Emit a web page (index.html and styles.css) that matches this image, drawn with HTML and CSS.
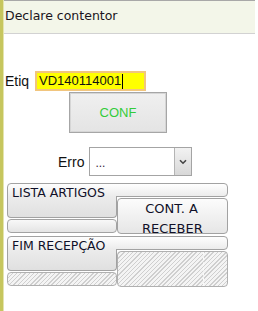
FILE: index.html
```html
<!DOCTYPE html>
<html lang="pt">
<head>
    <meta charset="UTF-8">
    <meta name="viewport" content="width=device-width, initial-scale=1.0">
    <title>Declare contentor</title>
    <link rel="stylesheet" href="styles.css">
</head>
<body>
    <div class="page">
        <div class="side"></div>
        <div class="main">
            <div class="header">Declare contentor</div>

            <div class="etiq-row">
                <label class="label">Etiq</label>
                <div class="field">VD140114001<span class="caret"></span></div>
            </div>

            <button class="conf">CONF</button>

            <div class="erro-row">
                <label class="label">Erro</label>
                <div class="select">
                    <span class="select-text">...</span>
                    <span class="select-arrow">
                        <svg width="8" height="6" viewBox="0 0 8 6"><path d="M1 1.2 L4 4.2 L7 1.2" fill="none" stroke="#444" stroke-width="1.6"/></svg>
                    </span>
                </div>
            </div>

            <div class="menu">
                <div class="group">
                    <div class="tab-top"><span class="tab-text">LISTA ARTIGOS</span></div>
                    <div class="tab-left"></div>
                    <div class="tab-right">CONT. A RECEBER</div>
                    <div class="tab-bottom"></div>
                </div>
                <div class="group">
                    <div class="tab-top"><span class="tab-text">FIM RECEPÇÃO</span></div>
                    <div class="tab-left"></div>
                    <div class="tab-right hatched"><div class="split"></div></div>
                    <div class="tab-bottom hatched"></div>
                </div>
            </div>
        </div>
    </div>
</body>
</html>
```

FILE: styles.css
```css
body {
    margin: 0;
    background: #fff;
    font-family: "DejaVu Sans", sans-serif;
    color: #111;
}

.page {
    display: flex;
    min-height: 311px;
}

.side {
    width: 3px;
    background: #c6c65e;
    border-right: 1px solid #e4e4ae;
}

.main {
    width: 251px;
    display: flex;
    flex-direction: column;
    align-items: flex-start;
}

/* Header */
.header {
    align-self: stretch;
    height: 25px;
    padding: 7px 0 0 1px;
    border-top: 1px solid #a8a8a8;
    border-bottom: 1px solid #d2d2d2;
    background: #f3f6e9;
    font-size: 12.5px;
    line-height: 15px;
    color: #1a1420;
}

.label {
    font-family: "Liberation Sans", Arial, sans-serif;
    font-size: 14px;
    color: #111;
}

/* Etiq */
.etiq-row {
    display: flex;
    align-items: center;
    margin-top: 37px;
    padding-left: 1px;
}

.etiq-row .label {
    width: 30px;
}

.field {
    box-sizing: border-box;
    width: 111px;
    height: 20px;
    padding-left: 2px;
    border: 2px solid #f1c57e;
    background: #ffff00;
    font-family: "Liberation Sans", Arial, sans-serif;
    font-size: 13px;
    line-height: 16px;
    display: flex;
    align-items: center;
}

.caret {
    width: 1px;
    height: 15px;
    margin-left: 1px;
    background: #000;
}

/* CONF */
.conf {
    box-sizing: border-box;
    width: 98px;
    height: 41px;
    margin: 1px 0 0 65px;
    border: 1px solid #a6a6a6;
    box-shadow: inset 0 0 0 1px #d6d6d6;
    background: linear-gradient(#f0f0f0, #e4e4e4);
    font-family: "Liberation Sans", Arial, sans-serif;
    font-size: 13px;
    color: #33cc3a;
    padding: 0;
}

/* Erro */
.erro-row {
    display: flex;
    align-items: center;
    margin: 14px 0 0 54px;
}

.erro-row .label {
    margin-right: 5px;
}

.select {
    box-sizing: border-box;
    width: 103px;
    height: 29px;
    border: 1px solid #a4a4a4;
    background: #fff;
    display: flex;
}

.select-text {
    flex: 1;
    padding: 8px 0 0 5px;
    font-family: "Liberation Sans", Arial, sans-serif;
    font-size: 12px;
    color: #3a1a3a;
}

.select-arrow {
    width: 16px;
    border-left: 1px solid #b4b4b4;
    background: linear-gradient(#f2f2f2, #d8d8d8);
    display: flex;
    align-items: center;
    justify-content: center;
}

/* Menu */
.menu {
    margin: 7px 0 0 3px;
    display: flex;
    flex-direction: column;
    gap: 2px;
}

.group {
    display: grid;
    grid-template-columns: 110px 111px;
    grid-template-rows: 14px 21px 16px;
    font-size: 12.5px;
}

.tab-top {
    grid-area: 1 / 1 / 2 / 3;
    border: 1px solid #a2a2a2;
    border-radius: 4px 4px 4px 0;
    background: linear-gradient(#fefefe, #ececec);
    padding: 3px 0 0 4px;
    line-height: 12px;
    white-space: nowrap;
    color: #101028;
}

.tab-text {
    position: relative;
    z-index: 1;
}

.tab-left {
    grid-area: 2 / 1 / 3 / 2;
    margin-top: -1px;
    border: 1px solid #a2a2a2;
    border-top: none;
    border-radius: 0 0 4px 4px;
    background: linear-gradient(#ececec, #e0e0e0);
}

.tab-right {
    grid-area: 2 / 2 / 4 / 3;
    margin-top: 1px;
    border: 1px solid #a2a2a2;
    border-radius: 4px;
    background: linear-gradient(#fcfcfc, #e6e6e6);
    overflow: hidden;
    text-align: center;
    font-size: 13px;
    line-height: 20px;
    padding: 0 26px 0 24px;
    color: #101028;
}

.tab-bottom {
    grid-area: 3 / 1 / 4 / 2;
    margin-top: 1px;
    margin-bottom: 1px;
    border: 1px solid #a2a2a2;
    border-radius: 4px;
    background: linear-gradient(#f8f8f8, #e4e4e4);
}

.hatched {
    border-color: #b0b0b0;
    background: repeating-linear-gradient(-45deg, #cfcfcf 0 1px, #f4f4f4 1px 3px);
    padding: 0;
}

.split {
    width: 85px;
    height: 100%;
    border-right: 1px dashed #fafafa;
}
```
